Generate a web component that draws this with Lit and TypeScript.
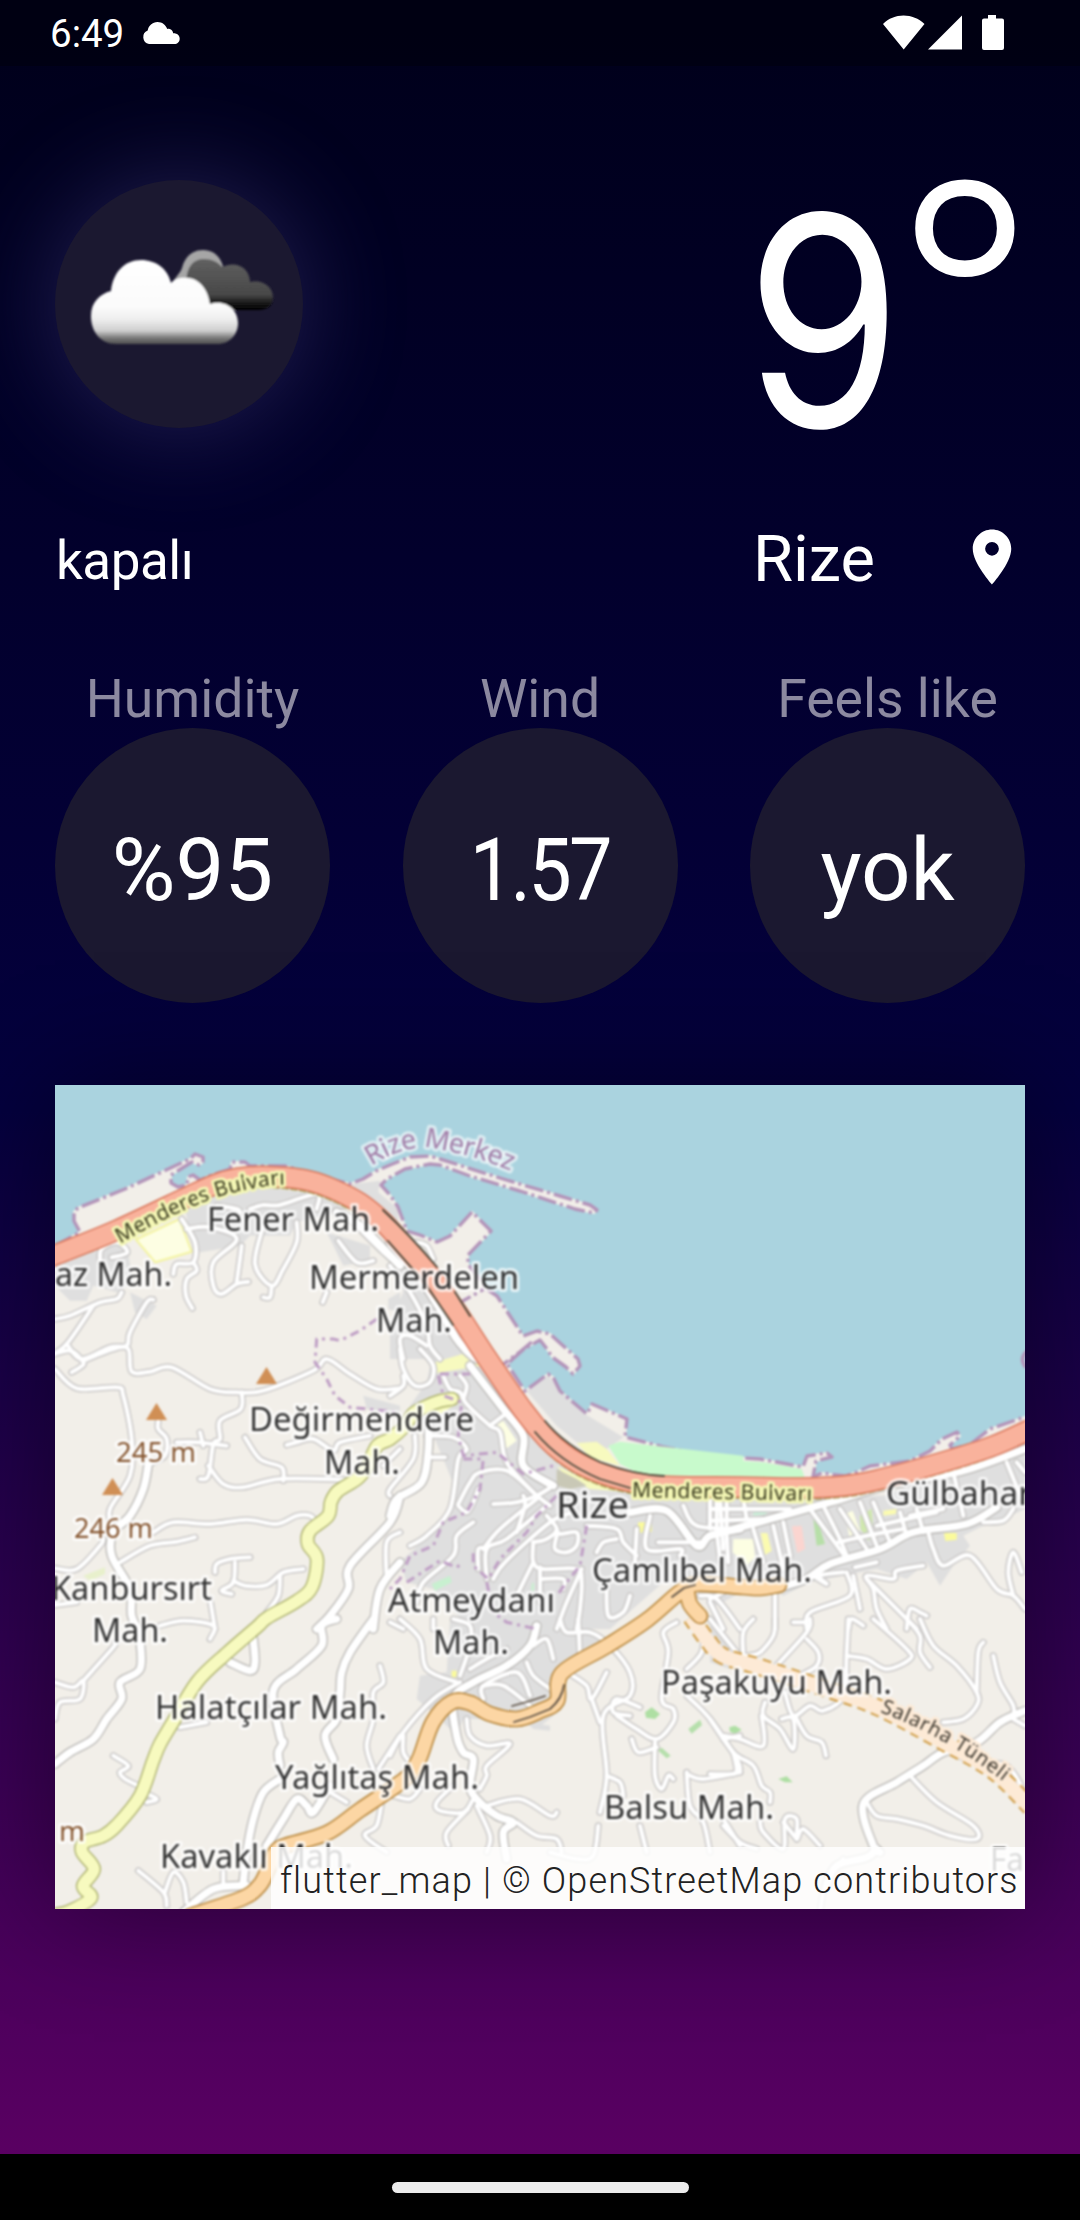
import { LitElement, html, svg, css } from "lit";
import { customElement, property } from "lit/decorators.js";

type Pt = [number, number];

/* Survey sheets: origin of each sheet on the map canvas, drawn at one third scale. */
const SHEETS: Record<string, Pt> = {
  A: [50, 1080],
  B: [390, 1080],
  C: [50, 1350],
  D: [390, 1350],
  E: [710, 1350],
  F: [50, 1620],
  G: [390, 1620],
  H: [710, 1620],
};

const path = (pts: Pt[], smooth = false): string => {
  if (!smooth || pts.length < 3) return "M" + pts.map((p) => p.join(" ")).join("L");
  let d = `M${pts[0].join(" ")}`;
  for (let i = 0; i < pts.length - 1; i++) {
    const a = pts[i - 1] ?? pts[i];
    const b = pts[i];
    const c = pts[i + 1];
    const e = pts[i + 2] ?? c;
    d += `C${b[0] + (c[0] - a[0]) / 6} ${b[1] + (c[1] - a[1]) / 6} ${c[0] - (e[0] - b[0]) / 6} ${c[1] - (e[1] - b[1]) / 6} ${c[0]} ${c[1]}`;
  }
  return d;
};

const parse = (s: string): Pt[] => s.trim().split(/\s+/).map((p) => p.split(",").map(Number) as Pt);

const sheetPts = (sheet: string, s: string): Pt[] => {
  const [ox, oy] = SHEETS[sheet];
  return parse(s).map(([x, y]) => [+(ox + x / 3).toFixed(1), +(oy + y / 3).toFixed(1)] as Pt);
};

const LAND = parse(`50,1250 55,1247 80,1233 74,1222 74,1213 78,1209 125,1190 190,1160 195,1155 203,1158 203,1163 199,1166
192,1163 171,1176 171,1184 178,1188 187,1186 188,1178 193,1176 200,1181 212,1176 230,1170 232,1163 245,1163 250,1167 285,1167 320,1177
350,1185 363,1180 376,1172 390,1166 410,1158 430,1157 440,1160 500,1179 560,1197 590,1206 597,1211 594,1214 575,1210 520,1192 470,1177
440,1166 430,1165 405,1170 387,1180 381,1186 390,1196 398,1208 407,1232 420,1236 437,1243 450,1237 472,1213 491,1232 468,1256 468,1265
488,1291 497,1297 523,1337 537,1332 550,1335 578,1360 580,1367 573,1375 566,1368 552,1358 547,1350 540,1341 524,1350 507,1365 525,1392
548,1375 553,1378 560,1392 587,1415 592,1405 627,1420 625,1438 663,1448 710,1457 760,1460 803,1468 807,1457 827,1454 832,1458 816,1462
813,1478 822,1474 845,1477 857,1473 870,1467 910,1462 930,1452 942,1440 957,1433 960,1437 950,1446 952,1450 970,1446 977,1440 990,1430
1025,1418 1030,1915 50,1915`);

const CITY: [string, string][] = [
  ["A", "15,555 190,480 230,500 250,610 200,640 130,620 110,665 60,665 15,620"],
  ["A", "400,360 600,320 760,340 900,380 860,400 740,430 720,470 600,470 570,500 450,520 420,470"],
  ["A", "240,640 320,680 290,720 255,700"],
  ["A", "830,460 960,500 960,545 880,560"],
  ["A", "905,315 990,305 985,340 1045,390 1045,440 990,390 920,340"],
  ["A", "1015,660 1050,640 1050,700 1015,690"],
  ["B", "0,480 140,640 230,820 180,840 0,840 0,730 40,640"],
  ["C", "940,140 1050,170 1050,200 950,180"],
  ["D", "130,0 270,20 420,220 520,350 640,420 1050,430 1050,600 960,720 820,700 660,840 240,840 130,720 50,700 30,640 180,500 200,430 160,330 130,260 60,170 110,100"],
  ["D", "410,125 475,80 500,110 585,195 700,265 650,300 560,280 500,230"],
  ["E", "0,450 300,440 520,440 700,370 945,280 945,480 880,510 820,530 760,560 780,590 730,650 690,710 650,640 590,690 500,660 300,700 220,740 150,700 0,780"],
  ["G", "180,0 500,0 640,60 660,90 500,150 490,290 440,330 380,300 220,300 200,350 150,300 80,240 90,170 170,160"],
  ["G", "410,310 480,320 480,335 430,330"],
  ["H", "0,0 60,60 60,150 0,130"],
];

const PATCHES: [string, string, string, string?][] = [
  ["A", "#fdfee3", "258,482 388,420 425,518 316,550", "#f4f4a0"],
  ["D", "#c8facc", "655,290 690,278 1060,320 1060,380 760,380 690,345"],
  ["E", "#c8facc", "0,330 160,340 275,360 285,388 0,380"],
  ["D", "#f7fabf", "135,40 250,5 275,50 140,72"],
  ["D", "#f7fabf", "560,282 620,278 650,300 690,350 600,325"],
  ["D", "#f7fabf", "100,175 200,130 225,150 150,195"],
  ["D", "#f7fabf", "500,350 560,380 700,415 720,430 600,420 530,385"],
  ["D", "#fdfee3", "320,225 340,215 380,275 350,298"],
  ["D", "#c9c8b6", "500,360 560,390 590,410 540,420 500,410"],
  ["D", "#fbfb9c", "745,520 785,520 785,548 742,552"],
  ["D", "#c8f0d0", "125,705 180,680 185,700 135,725"],
  ["D", "#c8f0d0", "425,705 432,700 432,725 424,725"],
  ["C", "#e8f0cc", "100,680 165,655 165,675 120,695"],
  ["E", "#fdfee3", "70,570 130,570 135,625 110,650 68,610"],
  ["E", "#fbfbb0", "152,552 172,552 185,605 165,618"],
  ["E", "#fbd5d0", "245,532 275,530 285,600 262,612"],
  ["E", "#b7dfa8", "310,510 325,520 345,585 320,590"],
  ["E", "#fdfee3", "405,495 428,485 450,545 418,562"],
  ["E", "#cfe8ad", "450,500 485,480 490,560 475,575 452,540"],
  ["E", "#fbfbb0", "520,485 560,480 558,495 520,500"],
  ["E", "#fbfb9c", "702,552 740,552 740,572 706,576"],
  ["E", "#c8f0d8", "130,485 170,480 170,495 130,500"],
  ["G", "#fbfb9c", "185,155 200,155 200,175 185,175"],
  ["G", "#aedfa3", "765,280 785,265 810,285 795,300 768,296"],
  ["G", "#b5dfab", "895,330 930,302 936,318 905,344"],
  ["G", "#b5dfab", "802,392 815,386 842,410 830,418"],
  ["H", "#aedfa3", "58,325 75,320 95,332 75,344 60,338"],
  ["H", "#aedfa3", "205,480 230,472 248,490 225,490"],
];

const MINOR: [string, string][] = [
  ["A", "15,720 60,710 150,670 200,660 215,640"],
  ["A", "0,830 50,795 130,680"],
  ["A", "50,795 95,840 180,805 230,800 240,760 290,670 310,662"],
  ["A", "150,545 155,510 200,490 232,520 185,535"],
  ["A", "395,420 435,490 430,550 380,555 370,585"],
  ["A", "430,550 440,575 410,600 408,650 427,688"],
  ["A", "410,450 480,445 560,480 490,550 490,620 515,645 560,615 595,608"],
  ["A", "560,610 570,540 575,500"],
  ["A", "600,390 640,378 690,378 800,345 800,390"],
  ["A", "640,440 615,555 665,620 700,570 740,490 740,430"],
  ["A", "665,620 660,655 640,655"],
  ["A", "500,380 560,390 570,400"],
  ["A", "865,485 920,550 970,545"],
  ["A", "818,670 830,640"],
  ["A", "880,400 1000,520 1050,560"],
  ["A", "1020,430 1050,480"],
  ["B", "0,500 60,560 150,700 210,800 250,840"],
  ["B", "0,560 60,640 110,740 120,800 150,840"],
  ["B", "40,840 30,780 60,770 110,800"],
  ["B", "80,490 110,500 130,540"],
  ["C", "15,60 80,118 200,115 220,140 245,270 240,380 180,480 185,530"],
  ["C", "0,20 60,5 100,40 90,55 65,70"],
  ["C", "100,35 190,0 235,0 245,68 300,68 365,55 480,120 560,130 640,125 790,65 830,30 900,75 980,120 1050,118"],
  ["C", "575,130 572,180 510,215 510,270 490,285 475,380 450,390"],
  ["C", "475,350 520,405 580,415 690,390 890,392"],
  ["C", "585,265 630,330 695,355 700,395"],
  ["C", "325,215 325,240 350,270 345,320 300,345"],
  ["C", "380,280 440,280 530,290"],
  ["C", "450,250 460,290"],
  ["C", "710,288 740,280 790,270 850,305 870,280 960,260"],
  ["C", "15,658 80,660 150,590 160,570"],
  ["C", "310,550 370,520 480,525 590,512 680,525 740,500 780,500 800,520"],
  ["C", "210,640 300,590 380,578 435,565"],
  ["C", "495,670 500,645 540,630 600,625"],
  ["C", "555,640 550,700 515,725 545,735"],
  ["C", "550,695 585,710 650,708 700,670 760,660"],
  ["C", "690,680 685,740 650,790"],
  ["C", "480,750 495,840"],
  ["C", "1050,300 1000,350"],
  ["C", "1010,690 1010,580 1050,550"],
  ["C", "0,770 80,760"],
  ["D", "30,0 40,60 75,110 120,100 130,50 90,0"],
  ["D", "0,140 40,110 40,80"],
  ["D", "160,80 180,120 210,130 230,165 300,230 330,250 350,340 430,430 480,470"],
  ["D", "210,80 230,110 220,150"],
  ["D", "300,230 340,200"],
  ["D", "0,440 0,420 70,330 75,260"],
  ["D", "110,260 190,265 230,300 205,330 180,480 110,560 60,590"],
  ["D", "115,325 165,325"],
  ["D", "205,465 240,400 270,370 350,365 430,430"],
  ["D", "205,470 230,490 250,460 265,420"],
  ["D", "310,465 380,460 440,440 490,410"],
  ["D", "280,600 330,540 440,450"],
  ["D", "290,690 290,600 350,570 470,470"],
  ["D", "265,660 265,600 290,600"],
  ["D", "310,690 345,640 480,520 550,490"],
  ["D", "400,440 405,470 380,550"],
  ["D", "250,520 200,560 190,620 100,700 80,760"],
  ["D", "430,580 430,640 460,660 560,660 575,700 570,780 560,840"],
  ["D", "430,640 400,700 380,740"],
  ["D", "500,560 495,600 530,610 560,590 560,550 510,555 500,540"],
  ["D", "430,580 470,570 500,540 470,500"],
  ["D", "450,690 520,690 520,720"],
  ["D", "450,655 450,760"],
  ["D", "575,660 530,760 500,840"],
  ["D", "590,530 680,540 700,580 740,620"],
  ["D", "620,610 640,580 680,570"],
  ["D", "650,700 655,800 700,790 720,740"],
  ["D", "740,540 735,640"],
  ["D", "780,500 770,600 870,600 870,620"],
  ["D", "805,580 940,580"],
  ["D", "960,450 960,540"],
  ["D", "990,450 1000,600"],
  ["D", "880,470 920,530 1050,540"],
  ["D", "930,740 980,750 1050,840"],
  ["D", "0,820 40,840"],
  ["E", "0,750 20,740 40,730"],
  ["E", "20,450 20,540"],
  ["E", "50,450 50,530"],
  ["E", "100,450 110,510"],
  ["E", "0,480 240,480"],
  ["E", "0,515 180,510"],
  ["E", "20,550 30,630"],
  ["E", "50,560 55,640"],
  ["E", "130,540 160,640"],
  ["E", "190,530 220,660"],
  ["E", "220,520 240,620"],
  ["E", "300,480 400,615"],
  ["E", "340,470 385,560 410,620"],
  ["E", "385,580 470,560 580,540"],
  ["E", "390,480 470,600"],
  ["E", "450,460 500,590"],
  ["E", "490,460 540,580"],
  ["E", "570,490 590,560"],
  ["E", "620,480 640,550"],
  ["E", "500,530 680,490"],
  ["E", "730,370 760,500"],
  ["E", "600,500 700,480"],
  ["E", "890,340 935,450"],
  ["E", "920,340 945,370"],
  ["E", "820,520 880,515 910,480"],
  ["E", "655,550 670,600 700,650 780,620 860,720 910,740 945,780"],
  ["E", "910,740 895,670 910,610 935,670"],
  ["E", "640,650 560,665 550,690 470,680 490,720 500,780 530,840"],
  ["E", "435,655 500,640"],
  ["E", "410,670 420,740 300,790 290,840"],
  ["E", "430,680 450,780"],
  ["E", "470,690 620,840"],
  ["E", "590,840 600,780 630,790 650,800"],
  ["E", "415,840 425,810 460,830"],
  ["E", "195,730 195,840"],
  ["E", "310,680 350,705 330,680 400,670"],
  ["E", "0,760 40,840"],
  ["E", "250,820 290,820"],
  ["F", "15,190 70,205 100,185 90,240 30,250 15,300"],
  ["F", "100,185 190,85 195,70"],
  ["F", "190,410 235,440 210,460 225,480 265,500"],
  ["F", "330,20 400,5 490,20 480,60"],
  ["F", "390,325 470,310"],
  ["F", "280,520 320,540 290,550"],
  ["F", "990,140 1000,190 970,220 970,300 950,380 970,450"],
  ["F", "985,450 1050,350"],
  ["F", "265,755 340,820 350,860"],
  ["F", "345,820 370,760 400,790 410,850"],
  ["F", "520,800 520,760"],
  ["F", "890,550 840,520"],
  ["F", "995,550 980,620 945,650 1010,700"],
  ["G", "30,0 90,60 110,150 200,190"],
  ["G", "130,30 130,0"],
  ["G", "190,0 240,20 240,80 210,170"],
  ["G", "240,150 290,120 350,90"],
  ["G", "210,190 130,240 40,340 0,410"],
  ["G", "40,350 40,400 60,430"],
  ["G", "510,0 530,40 600,40 660,80 720,160 720,230 640,290 650,470 630,580"],
  ["G", "565,0 570,120"],
  ["G", "430,80 470,60 490,120"],
  ["G", "410,130 430,170 480,210"],
  ["G", "280,200 340,200 420,260"],
  ["G", "280,240 280,200 380,160 420,230"],
  ["G", "540,165 590,200 605,240 650,160"],
  ["G", "605,240 630,310"],
  ["G", "230,300 240,350 290,380 360,375 290,440 290,470 270,510"],
  ["G", "10,530 60,540 90,510"],
  ["G", "250,540 220,580 150,575 140,550 190,500"],
  ["G", "235,570 170,640 175,680"],
  ["G", "260,560 300,650 290,700"],
  ["G", "290,560 390,540 480,590 500,580"],
  ["G", "380,610 440,650 500,660 515,700"],
  ["G", "625,620 610,710 560,720 480,700"],
  ["G", "650,470 690,490 700,530"],
  ["G", "750,620 770,700"],
  ["G", "720,290 670,280 680,240 750,265"],
  ["G", "680,290 740,330 800,360 850,310 850,270 815,240 835,100 820,40 860,10"],
  ["G", "725,360 745,400 800,385"],
  ["G", "795,370 795,470 815,510 835,470 850,480"],
  ["G", "940,30 935,100 890,150"],
  ["G", "890,230 960,300 1040,420 1050,460"],
  ["G", "890,460 900,560 940,610 960,700"],
  ["G", "890,465 940,480 1050,460"],
  ["G", "1000,360 1050,350"],
  ["G", "1000,600 1050,680"],
  ["H", "0,0 120,150"],
  ["H", "100,110 100,40 130,0"],
  ["H", "110,110 150,100 190,50 195,0"],
  ["H", "190,150 290,40 300,0"],
  ["H", "290,60 325,100 320,140 270,170"],
  ["H", "415,0 410,100 400,230 340,275 300,260 250,290 225,220"],
  ["H", "410,110 470,120 530,150 600,120 590,90 490,0"],
  ["H", "590,0 630,50 630,100 660,145"],
  ["H", "630,0 670,80 740,140 800,220 800,260 760,300 700,310"],
  ["H", "800,220 805,100 820,70"],
  ["H", "850,110 870,190 910,260 910,290"],
  ["H", "165,250 160,290 210,330 250,390 250,300 215,300"],
  ["H", "155,290 160,380 90,360 40,350"],
  ["H", "255,290 290,350 335,370 348,410"],
  ["H", "0,300 70,400 130,440 155,500 180,520 180,550"],
  ["H", "70,400 80,450 70,465 0,465"],
  ["H", "150,610 160,640 220,690 225,600 260,600 260,660 280,630 330,680"],
  ["H", "220,610 260,660"],
  ["H", "600,470 680,550 790,620 800,660 720,650 640,620 560,600 500,590 470,550"],
  ["H", "40,620 90,670 140,690"],
  ["H", "720,400 800,430 890,440 945,520"],
  ["H", "330,880 350,780 400,720"],
  ["H", "910,300 945,320"],
];

const MAJOR: [string, string][] = [
  ["A", "860,400 930,440 1050,560"],
  ["B", "0,490 120,640 200,780 260,840"],
  ["D", "240,50 340,180 400,260 400,350 490,410"],
  ["D", "115,180 115,300 95,400 20,450 0,500"],
  ["D", "720,490 830,485 920,590 960,560 1050,540"],
  ["E", "0,560 180,510 360,460 530,410 760,365 945,300"],
  ["E", "210,715 290,690 360,645 510,600 610,550 770,525 860,475"],
  ["C", "295,345 280,420 240,500 190,550 185,620 240,720 245,800 270,850"],
  ["C", "1050,440 1020,520 900,650 895,720 840,800 800,840"],
  ["C", "1050,640 990,720 970,840"],
  ["F", "270,60 270,150 210,190 215,240 170,300 130,360 60,400 15,435"],
  ["F", "860,0 815,20 815,80 740,150 670,215 690,350 700,370 685,400 690,440"],
  ["F", "970,0 900,100 875,160 870,220 860,300 825,350 850,420"],
  ["F", "690,480 640,520 610,600 590,700 580,790"],
  ["F", "840,500 790,580 770,560 740,540 700,600 650,680"],
  ["F", "400,880 490,810 590,800"],
  ["F", "610,60 615,130 600,155 540,130"],
  ["G", "440,20 420,80 350,140 250,190 190,240 200,350 220,400 250,420 240,500 260,540 320,590 370,610 340,640 350,720"],
  ["H", "945,275 870,310 800,370 700,400 640,440 560,490 460,555 490,680 510,700"],
  ["H", "500,690 470,715 380,740 350,800"],
];

const TRUNK = parse("40,1262 55,1256 117,1231 200,1192 225,1182 250,1177.5 283,1178 310,1182 333,1190 360,1204 383,1223 410,1253 432,1279 457,1313 487,1359 523,1411 547,1440 563,1454 580,1465 600,1474 623,1481 663,1487 740,1488 800,1489 843,1487 877,1481 943,1463 993,1447 1035,1428");
const YELLOW = parse("452,1400 440,1402 425,1408 413,1415 404,1428 390,1440 377,1447 367,1468 357,1480 338,1492 331,1503 328,1517 310,1532 308,1545 317,1560 312,1588 297,1602 267,1619 257,1628 227,1654 197,1683 173,1723 160,1745 153,1762 140,1797 117,1826 103,1837 85,1843 82,1853 94,1870 83,1887 91,1899 70,1912 55,1916");
const ORANGE_W = parse("190,1917 243,1899 259,1887 267,1873 275,1854 285,1847 327,1834 360,1811 397,1786 410,1775 420,1758 433,1723 452,1703 470,1704 490,1715 517,1720 540,1712 557,1702 562,1674 607,1647 647,1621 680,1593 697,1585 743,1588 760,1589 779,1586");
const BRANCH = parse("687,1590 690,1605 700,1617");
const TUNNEL = parse("691,1618 708,1642 723,1657 760,1668 820,1688 877,1708 943,1743 993,1772 1030,1808");

const BOUNDARY: [string, string][] = [
  ["C", "980,-90 930,-55 870,-25 850,-30 800,-30 795,40 830,90 855,140 900,175 1050,190"],
  ["D", "150,75 240,75"],
  ["D", "145,80 160,140 215,160 205,260 220,320 320,310 400,375 490,350"],
  ["D", "220,330 280,330 270,420 230,490 160,520 130,590 60,620 30,690 0,720"],
  ["D", "500,440 440,500 410,550 330,630 295,690 250,650 250,610"],
  ["D", "50,700 150,635 200,655 220,640"],
  ["D", "290,700 310,790 350,820 440,840"],
  ["D", "590,530 570,650 530,700 500,740"],
];

interface Place {
  text: string;
  x: number;
  y: number;
  w: number;
  size?: number;
  cls?: string;
}

const PLACES: Place[] = [
  { text: "az Mah.", x: 55, y: 1287, w: 117 },
  { text: "Fener Mah.", x: 207, y: 1232, w: 172 },
  { text: "Mermerdelen", x: 309, y: 1290, w: 210 },
  { text: "Mah.", x: 376, y: 1333, w: 76 },
  { text: "Değirmendere", x: 249, y: 1432, w: 225 },
  { text: "Mah.", x: 324, y: 1475, w: 76 },
  { text: "Rize", x: 556, y: 1519, w: 73, size: 36 },
  { text: "Gülbahar", x: 886, y: 1506, w: 146 },
  { text: "Çamlıbel Mah.", x: 592, y: 1583, w: 220 },
  { text: "Atmeydanı", x: 388, y: 1613, w: 167 },
  { text: "Mah.", x: 433, y: 1655, w: 76 },
  { text: "Kanbursırt", x: 51, y: 1601, w: 161 },
  { text: "Mah.", x: 92, y: 1643, w: 76 },
  { text: "Halatçılar Mah.", x: 155, y: 1720, w: 232 },
  { text: "Yağlıtaş Mah.", x: 275, y: 1790, w: 204 },
  { text: "Kavaklı Mah.", x: 160, y: 1869, w: 193 },
  { text: "Paşakuyu Mah.", x: 661, y: 1695, w: 231 },
  { text: "Balsu Mah.", x: 604, y: 1820, w: 170 },
  { text: "Fa", x: 990, y: 1872, w: 34 },
  { text: "245 m", x: 116, y: 1463, w: 80, size: 27, cls: "peak" },
  { text: "246 m", x: 74, y: 1539, w: 79, size: 27, cls: "peak" },
  { text: "m", x: 59, y: 1842, w: 26, size: 27, cls: "peak" },
];

const PEAKS: Pt[] = [
  [266.5, 1385],
  [156.5, 1421],
  [112.5, 1496],
];

const line = (cls: string, d: string) => svg`<path class=${cls} d=${d}></path>`;

@customElement("city-map")
export class CityMap extends LitElement {
  static styles = css`
    :host { display: block; position: relative; height: 824px; overflow: hidden; background: #aad3df; }
    .canvas { display: block; width: 970px; height: 824px; }
    .tiles { filter: blur(0.8px); }
    path { fill: none; stroke-linejoin: round; stroke-linecap: round; }
    .sea { fill: #aad3df; }
    .land { fill: #f2efe9; stroke: #f2efe9; stroke-width: 2; }
    .shore { stroke: #b394b9; stroke-width: 3.4; stroke-dasharray: 19 4 3 4; stroke-linecap: butt; }
    .city { fill: #dfdfdf; }
    .minor-case { stroke: #cbc9c8; stroke-width: 7; }
    .minor { stroke: #fff; stroke-width: 4; }
    .major-case { stroke: #b9b7b4; stroke-width: 10; }
    .major { stroke: #fff; stroke-width: 7.4; }
    .trunk-case { stroke: #d9765b; stroke-width: 21.5; }
    .verge { stroke: #a9a45c; stroke-width: 2; stroke-dasharray: 6 3; }
    .trunk { stroke: #f9b29c; stroke-width: 18.5; }
    .yellow-case { stroke: #adb26e; stroke-width: 14.4; }
    .yellow { stroke: #f7fabf; stroke-width: 11.6; }
    .orange-case { stroke: #b8873c; stroke-width: 16.6; }
    .orange { stroke: #fcd6a4; stroke-width: 13.4; }
    .tunnel-case { stroke: #cf9c45; stroke-width: 18; stroke-dasharray: 9 6; stroke-linecap: butt; }
    .tunnel { stroke: #fdead6; stroke-width: 14; stroke-linecap: butt; }
    .boundary { stroke: #bf9fc5; stroke-width: 3; stroke-dasharray: 9 5 3 5; stroke-linecap: butt; }
    .summit { fill: #d08f55; }
    text { font-family: "Noto Sans", sans-serif; fill: #333; stroke: rgba(255, 255, 255, 0.72); stroke-width: 6; paint-order: stroke; stroke-linejoin: round; }
    .peak { fill: #85552f; }
    .road-name { fill: #3a3a1e; stroke: #f4f7b5; font-size: 21px; }
    .tunnel-name { fill: #3c372e; stroke: #fdead6; font-size: 20px; }
    .district { fill: #a37fa9; font-size: 27px; stroke: rgba(255, 255, 255, 0.6); }
    .credit {
      position: absolute; right: 0; bottom: 0; box-sizing: border-box; width: 754px; height: 62px; padding: 2px 0 0 9px;
      background: rgba(255, 255, 255, 0.82); color: #222; font: 300 36px/64px Roboto, sans-serif; letter-spacing: 1.14px; white-space: nowrap;
    }
  `;

  render() {
    return html`
      <svg class="canvas" viewBox="55 1086 970 824">
        <g class="tiles">
        ${line("sea", "M40 1070H1040V1925H40Z")}
        ${line("land", path(LAND))}
        ${CITY.map(([s, p]) => line("city", path(sheetPts(s, p)) + "Z"))}
        ${line("shore", path(LAND.slice(1, -2)))}
        ${line("shore", "M1027 1352Q1018 1360 1027 1370")}
        ${line("shore", "M454 1307L484 1290M493 1373L521 1352L534 1341")}
        ${PATCHES.map(([s, c, p, k]) => svg`<path d=${path(sheetPts(s, p)) + "Z"} style=${`fill:${c};stroke:${k ?? "none"};stroke-width:2`}></path>`)}
        ${MINOR.map(([s, p]) => line("minor-case", path(sheetPts(s, p), true)))}
        ${MAJOR.map(([s, p]) => line("major-case", path(sheetPts(s, p), true)))}
        ${MINOR.map(([s, p]) => line("minor", path(sheetPts(s, p), true)))}
        ${MAJOR.map(([s, p]) => line("major", path(sheetPts(s, p), true)))}
        ${line("yellow-case", path(YELLOW, true))}${line("yellow", path(YELLOW, true))}
        ${line("tunnel-case", path(TUNNEL, true))}${line("tunnel", path(TUNNEL, true))}
        ${line("orange-case", path(BRANCH, true))}${line("orange-case", path(ORANGE_W, true))}
        ${line("orange", path(BRANCH, true))}${line("orange", path(ORANGE_W, true))}
        <path d="M512 1707L530 1702L545 1697M514 1723L530 1718L550 1710Q562 1700 564 1686M672 1598L684 1589L695 1586" stroke="#5d5145" stroke-width="1.8"></path>
        ${BOUNDARY.map(([s, p]) => line("boundary", path(sheetPts(s, p))))}
        <path class="verge" d=${path(TRUNK, true)} transform="translate(-2 11)"></path>
        ${line("trunk-case", path(TRUNK, true))}${line("trunk", path(TRUNK, true))}
        <path d="M383 1211Q410 1236 437 1268M455 1293L470 1317M545 1422Q565 1446 600 1463Q635 1476 664 1477M535 1433Q560 1463 600 1480L630 1489M388 1242L425 1284L453 1326" stroke="#4b4a3c" stroke-width="1.8"></path>
        ${PEAKS.map(([x, y]) => svg`<path class="summit" d="M${x - 10.5} ${y}L${x} ${y - 17}L${x + 10.5} ${y}Z"></path>`)}
        <path id="coast-a" d="M120 1245Q190 1204 232 1194T292 1186"></path>
        <path id="coast-b" d="M632 1498L820 1502"></path>
        <path id="pier" d="M371 1167Q408 1143 438 1150Q478 1157 518 1175"></path>
        <path id="bore" d="M880 1713Q948 1738 1010 1788"></path>
        ${PLACES.map(
          (p) => svg`<text class=${p.cls ?? "place"} x=${p.x} y=${p.y} font-size=${p.size ?? 32.5} textLength=${p.w} lengthAdjust="spacingAndGlyphs">${p.text}</text>`,
        )}
        <text class="road-name"><textPath href="#coast-a" textLength="177">Menderes Bulvarı</textPath></text>
        <text class="road-name"><textPath href="#coast-b" textLength="180">Menderes Bulvarı</textPath></text>
        <text class="district"><textPath href="#pier" textLength="147">Rize Merkez</textPath></text>
        <text class="tunnel-name"><textPath href="#bore" textLength="142">Salarha Tüneli</textPath></text>
        </g>
      </svg>
      <div class="credit">flutter_map | © OpenStreetMap contributors</div>
    `;
  }
}

@customElement("weather-stat")
export class WeatherStat extends LitElement {
  @property() label = "";
  @property() value = "";

  static styles = css`
    :host { display: flex; flex-direction: column; align-items: center; width: 275px; }
    .label { height: 64px; font-size: 53.5px; line-height: 69px; color: #8c89a0; white-space: nowrap; }
    .disc { display: flex; align-items: center; justify-content: center; width: 275px; height: 275px; border-radius: 50%; background: #1b1830; }
    .value { font-size: 87px; line-height: 100px; color: #fff; padding-top: 9px; }
    :host([narrow]) .value { letter-spacing: -3px; transform: scaleX(0.89); }
  `;

  render() {
    return html`
      <div class="label">${this.label}</div>
      <div class="disc"><span class="value">${this.value}</span></div>
    `;
  }
}

@customElement("app-root")
export class AppRoot extends LitElement {
  static styles = css`
    :host {
      display: flex; flex-direction: column; width: 1080px; height: 2220px; overflow: hidden;
      font-family: Roboto, sans-serif; color: #fff;
      background: linear-gradient(180deg, #00001a 0, #04003e 1110px, #5f0064 2220px);
    }
    .status { display: flex; align-items: center; box-sizing: border-box; height: 66px; padding: 0 76px 0 50px; background: rgba(0, 0, 0, 0.3); }
    .time { font-size: 38.5px; line-height: 66px; padding-top: 2px; width: 92px; }
    .status-icons { margin-left: auto; }
    .status svg { display: block; }
    .body { display: flex; flex-direction: column; flex: 1; padding: 0 55px; }
    .now { display: flex; justify-content: space-between; height: 420px; }
    .badge { display: block; width: 248px; height: 248px; margin-top: 114px; border-radius: 50%; background: #1b1830; box-shadow: 0 0 100px 0 rgba(84, 76, 150, 0.42); }
    .temp { display: flex; align-items: flex-start; margin-right: -8px; }
    .digit { font-family: Inter, Roboto, sans-serif; font-weight: 400; font-size: 293px; line-height: 300px; margin-top: 105px; transform: translateX(5px) scaleX(0.86); transform-origin: right; }
    .degree { font-family: "Open Sans", sans-serif; font-weight: 300; font-size: 318px; line-height: 318px; margin-top: 64px; -webkit-text-stroke: 4.5px #fff; }
    .where { display: flex; align-items: flex-start; height: 178px; }
    .sky { font-size: 53px; line-height: 60px; letter-spacing: -0.5px; padding: 45px 0 0 1px; }
    .city { font-size: 65px; line-height: 76px; margin-left: auto; padding: 35px 0 0; width: 206px; }
    .pin { display: block; margin-top: 38px; }
    .stats { display: flex; justify-content: space-between; height: 421px; }
    city-map { box-shadow: 0 0 110px 0 rgba(0, 0, 0, 0.42); }
    .nav { display: flex; justify-content: center; align-items: center; height: 66px; background: #000; }
    .pill { width: 297px; height: 11px; border-radius: 6px; background: #ececec; }
  `;

  render() {
    return html`
      <header class="status">
        <span class="time">6:49</span>
        <svg width="38" height="22" viewBox="0 0 38 22" fill="#fff">
          <path d="M7 22a7 7 0 0 1-1.3-13.4C6.500 3.500 10.500 0 15.500 0c4.600 0 8.300 2.800 9.700 7 .8-.3 1.600-.3 2.400 0 2 .5 3.300 2.200 3.600 4.300 3.900-.1 6.500 2 6.500 5.400 0 3.100-2.300 5.300-5.400 5.300z"></path>
        </svg>
        <svg class="status-icons" width="121" height="36" viewBox="0 0 121 36" fill="#fff">
          <path d="M0 9C11-2.500 30-2.500 41.500 9L20.700 34.500zM45 34.500L79 0.500V34.500zM105 0h8v3.500h6q2 0 2 2V33q0 2-2 2h-18q-2 0-2-2V5.500q0-2 2-2h4z"></path>
        </svg>
      </header>
      <main class="body">
        <section class="now">
          <svg class="badge" viewBox="55 180 248 248">
            <defs>
              <linearGradient id="front" x1="0" y1="0" x2="0" y2="1">
                <stop offset="0" stop-color="#fff"></stop>
                <stop offset="0.55" stop-color="#fbfbfb"></stop>
                <stop offset="0.7" stop-color="#efefef"></stop>
                <stop offset="0.84" stop-color="#cfcfcf"></stop>
                <stop offset="0.93" stop-color="#777"></stop>
                <stop offset="1" stop-color="#505050"></stop>
              </linearGradient>
              <linearGradient id="back" x1="0" y1="0" x2="0" y2="1">
                <stop offset="0" stop-color="#606060"></stop>
                <stop offset="0.7" stop-color="#484848"></stop>
                <stop offset="0.85" stop-color="#1c1c1c"></stop>
                <stop offset="1" stop-color="#000"></stop>
              </linearGradient>
              <filter id="soft" x="-10%" y="-10%" width="120%" height="120%"><feGaussianBlur stdDeviation="1.1"></feGaussianBlur></filter>
            </defs>
            <g filter="url(#soft)">
              <path fill="#a6a6a6" d="M172 284C174 278 180 274 182 268C185 256 193 250 203 250C213 250 220 256 223 266L190 292Z"></path>
              <path fill="url(#back)" d="M187 292C184 270 191 259 204 259C212 259 218 262 222 267C236 260 250 268 250 282C262 279 273 287 273 297C273 305 268 310 258 310H210Z"></path>
              <path fill="url(#front)" d="M116 344C100 344 91 331 91 316C91 302 100 294 111 291C113 272 125 260 141 260C156 260 168 269 171 283C175 278 182 277 188 278C200 279 208 290 210 304C225 299 238 309 238 323C238 335 229 344 218 344Z"></path>
            </g>
          </svg>
          <div class="temp"><span class="digit">9</span><span class="degree">°</span></div>
        </section>
        <section class="where">
          <span class="sky">kapalı</span>
          <span class="city">Rize</span>
          <svg class="pin" width="66" height="66" viewBox="0 0 24 24" fill="#fff">
            <path d="M12 2C8.130 2 5 5.130 5 9c0 5.250 7 13 7 13s7-7.750 7-13c0-3.870-3.130-7-7-7zm0 9.500a2.500 2.500 0 0 1 0-5 2.500 2.500 0 0 1 0 5z"></path>
          </svg>
        </section>
        <section class="stats">
          <weather-stat label="Humidity" value="%95"></weather-stat>
          <weather-stat label="Wind" value="1.57" narrow></weather-stat>
          <weather-stat label="Feels like" value="yok"></weather-stat>
        </section>
        <city-map></city-map>
      </main>
      <footer class="nav"><div class="pill"></div></footer>
    `;
  }
}
